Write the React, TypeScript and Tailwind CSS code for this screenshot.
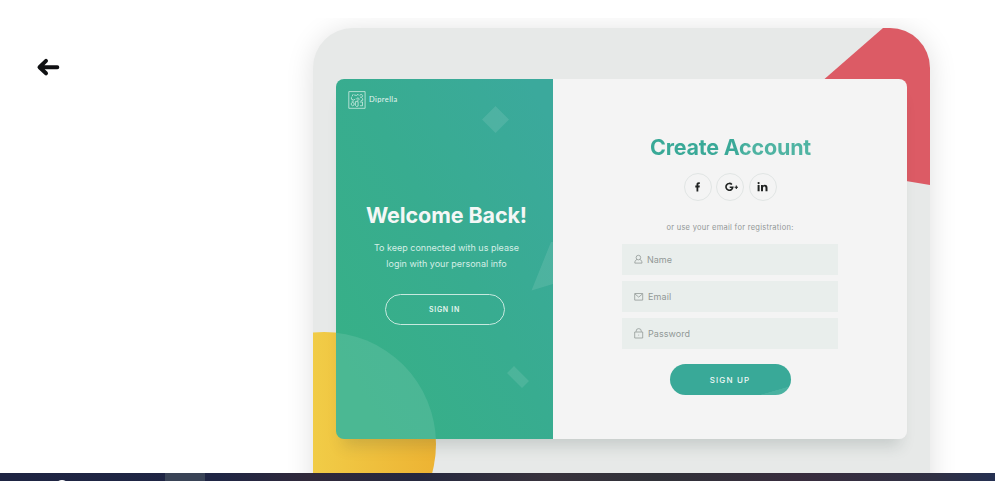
import React from "react";

function BackArrow() {
  return (
    <svg width="24" height="20" viewBox="0 0 24 20" fill="none" className="mt-[57px] ml-[36px] block">
      <path d="M10 3.9 3.5 10.2 10 16.3M4 10.2H21.3" stroke="#101113" strokeWidth="4" strokeLinecap="round" strokeLinejoin="round" />
    </svg>
  );
}

function Logo() {
  return (
    <div className="flex h-[18px] items-center">
      <svg width="18" height="18" viewBox="0 0 18 18" fill="none" stroke="#d9f0e8" strokeWidth=".75" strokeLinejoin="round">
        <rect x=".8" y=".6" width="16.3" height="16.7" />
        <path d="M5.2 3.2 4 5.4M3.4 6.2v2l2.3.9 1.6-1M6.2 4l2.3.4L10 3.3l1.2 1.3M8.4 7.7l1.8-.9 1.1 1.3-1 1.2-1.6-.4M11.8 4l1.8-.6 1 1.4-.8 1.6-1.8-.3M14.4 7.2l.4 1.9-2 .8M3.3 12.2l1.4-.8 1.4.8v1.7l-1.4.9-1.4-.9zM7.4 10.6h2.7v4.5l-1.7.3-1-1zM11.8 11h2.7v3.8l-2.6-.1M3.7 10.2h2" />
      </svg>
      <span className="ml-[3px] font-['Lato',sans-serif] text-[7.5px] leading-[18px] tracking-[0.4px] text-[#e5f5f0]">Diprella</span>
    </div>
  );
}

function Social({ children }: { children: React.ReactNode }) {
  return <div className="flex h-7 w-7 items-center justify-center rounded-full border border-[#e1e5e4] text-[#202322]">{children}</div>;
}

function Field({ label, icon, labelClass }: { label: string; icon: React.ReactNode; labelClass: string }) {
  return (
    <div className="flex h-[31px] w-[216px] items-center bg-[#e9eeec] pl-3">
      {icon}
      <span className={`text-[9px] text-[#929997] ${labelClass}`}>{label}</span>
    </div>
  );
}

const iconProps = { width: 10, height: 12, viewBox: "0 0 10 12", fill: "none", stroke: "#929997", strokeWidth: 0.8 };

function WelcomePanel() {
  return (
    <section className="relative flex w-[217px] flex-col items-center overflow-hidden rounded-l-[8px] bg-[linear-gradient(60deg,#37b087_12%,#38ac90_53%,#3ba99c_94%)]">
      <svg className="absolute inset-0" width="217" height="360" viewBox="0 0 217 360" fill="#fff" fillOpacity=".1">
        <circle cx="-12" cy="365" r="112" />
        <path d="m159.5 27 13.5 13.5L159.5 54 146 40.5ZM215 163l-19.5 48.5L217 205v-42ZM178 287l15 15-7 7-15-15Z" />
      </svg>
      <div className="relative mt-3 ml-3 self-start"><Logo /></div>
      <h1 className="relative mt-[92px] ml-[4px] h-7 text-[21.5px] leading-7 font-bold tracking-[-0.1px] whitespace-nowrap text-[#f4f7f6]">Welcome Back!</h1>
      <p className="relative mt-[11px] ml-[4px] text-center text-[9px] leading-4 text-[#d5eee6]">To keep connected with us please<br />login with your personal info</p>
      <button className="relative mt-[22px] h-[31px] w-[120px] rounded-full border border-[#c7e9df] pt-[2px] text-[7px] font-semibold tracking-[0.7px] text-[#e4f5ef]">SIGN IN</button>
    </section>
  );
}

function RegistrationPanel() {
  return (
    <section className="flex w-[354px] flex-col items-center rounded-r-[8px] bg-[#f4f4f4]">
      <h2 className="mt-[54px] ml-px h-7 bg-[linear-gradient(110deg,#38a997_0%,#3ba998_53%,#4eb3a2_61%,#50b4a3_100%)] bg-clip-text text-[21.5px] leading-7 font-bold tracking-[-0.2px] whitespace-nowrap text-transparent">Create Account</h2>
      <div className="mt-3 flex gap-[4.5px]">
        <Social><svg width="6" height="10" viewBox="0 0 6 10" fill="currentColor"><path d="M1.5 9.5V5.4H.3V3.6h1.2V2.5C1.5 1 2.3.3 3.8.3h1v1.6h-.7c-.6 0-.8.2-.8.8v.9h1.5l-.2 1.8H3.3v4.1z" /></svg></Social>
        <Social><svg className="ml-[3px]" width="14" height="10" viewBox="0 0 14 10" fill="none" stroke="currentColor"><path strokeWidth="1.6" d="M6.9 2.5A3.4 3.4 0 1 0 7.8 5.2H4.7" /><path strokeWidth="1.1" d="M9.6 5.2h3.4M11.3 3.5v3.4" /></svg></Social>
        <Social><svg width="11" height="11" viewBox="0 0 11 11" fill="currentColor"><circle cx="1.6" cy="1.1" r="1.1" /><path d="M.6 2.9h2v6.4h-2zM4 2.9h1.9v.8c.4-.6 1-.9 1.9-.9 1.8 0 2.7 1 2.7 2.9v3.6h-2V6.1c0-1-.4-1.6-1.2-1.6-.9 0-1.3.6-1.3 1.6v3.2H4z" /></svg></Social>
      </div>
      <p className="mt-[21px] h-3 text-[7.5px] leading-3 tracking-[0.28px] whitespace-nowrap text-[#929796]">or use your email for registration:</p>
      <div className="mt-[10px] flex flex-col gap-[6px]">
        <Field label="Name" labelClass="ml-[3px]" icon={<svg {...iconProps}><circle cx="4.4" cy="3.6" r="2.3" /><path d="M3 5.4C1.5 6.1.8 7.1.8 9.1H8c0-2-.7-3-2.2-3.7" /></svg>} />
        <Field label="Email" labelClass="ml-[4px] tracking-[0.1px]" icon={<svg {...iconProps}><path d="M.7 2.5h8v6.6h-8ZM1 3l3.7 3.1L8.4 3" /></svg>} />
        <Field label="Password" labelClass="ml-[4px] tracking-[0.05px]" icon={<svg {...iconProps}><path d="M.7 4h8v6h-8ZM2.1 3.8v-.6a2.6 2.6 0 0 1 5.2 0v.6M4.3 7.1h.8" /></svg>} />
      </div>
      <button className="mt-[15px] h-[31px] w-[121px] overflow-hidden rounded-full bg-[linear-gradient(164deg,#39a998_86%,#4ab2a1_86.7%)] text-[8px] font-medium tracking-[1.15px] text-[#f0f8f6]">SIGN UP</button>
    </section>
  );
}

export default function App() {
  return (
    <main className="h-[481px] w-[995px] overflow-hidden bg-white font-['Inter',sans-serif]">
      <div className="flex h-[473px]">
        <aside className="w-[253px]"><BackArrow /></aside>
        <div className="mt-[18px] flex-1 overflow-hidden pt-[10px] pl-[60px]">
          <div className="relative h-[500px] w-[617px] rounded-[40px] bg-[#e7e9e8] px-[23px] pt-[51px] shadow-[0_3px_28px_rgba(0,0,0,0.13)]">
            <svg className="absolute inset-0" width="617" height="500" viewBox="0 0 617 500">
              <defs>
                <linearGradient id="gold"><stop offset="0.45" stopColor="#f1cc47" /><stop offset="1" stopColor="#edb333" /></linearGradient>
                <clipPath id="frame"><rect width="617" height="500" rx="40" /></clipPath>
              </defs>
              <g clipPath="url(#frame)">
                <path d="M570 0 500 61 593 153 617 157V0Z" fill="#dc5b65" />
                <circle cx="11" cy="416" r="112" fill="url(#gold)" />
              </g>
            </svg>
            <div className="relative flex h-[360px] w-[571px] rounded-[8px] shadow-[0_14px_15px_-7px_rgba(50,70,65,0.18)]">
              <WelcomePanel />
              <RegistrationPanel />
            </div>
          </div>
        </div>
      </div>
      <footer className="flex h-2 overflow-hidden bg-[linear-gradient(90deg,#1e2442_0%,#1f2544_22%,#30293a_31%,#25283f_42%,#38323c_55%,#303138_66%,#382c3d_80%,#303044_94%,#253052_100%)]">
        <svg className="mt-[7px] ml-[55px]" width="14" height="14" viewBox="0 0 14 14"><circle cx="7" cy="7" r="6" fill="none" stroke="white" strokeWidth="2" /></svg>
        <div className="ml-[96px] h-2 w-10 bg-[#394356]" />
      </footer>
    </main>
  );
}
